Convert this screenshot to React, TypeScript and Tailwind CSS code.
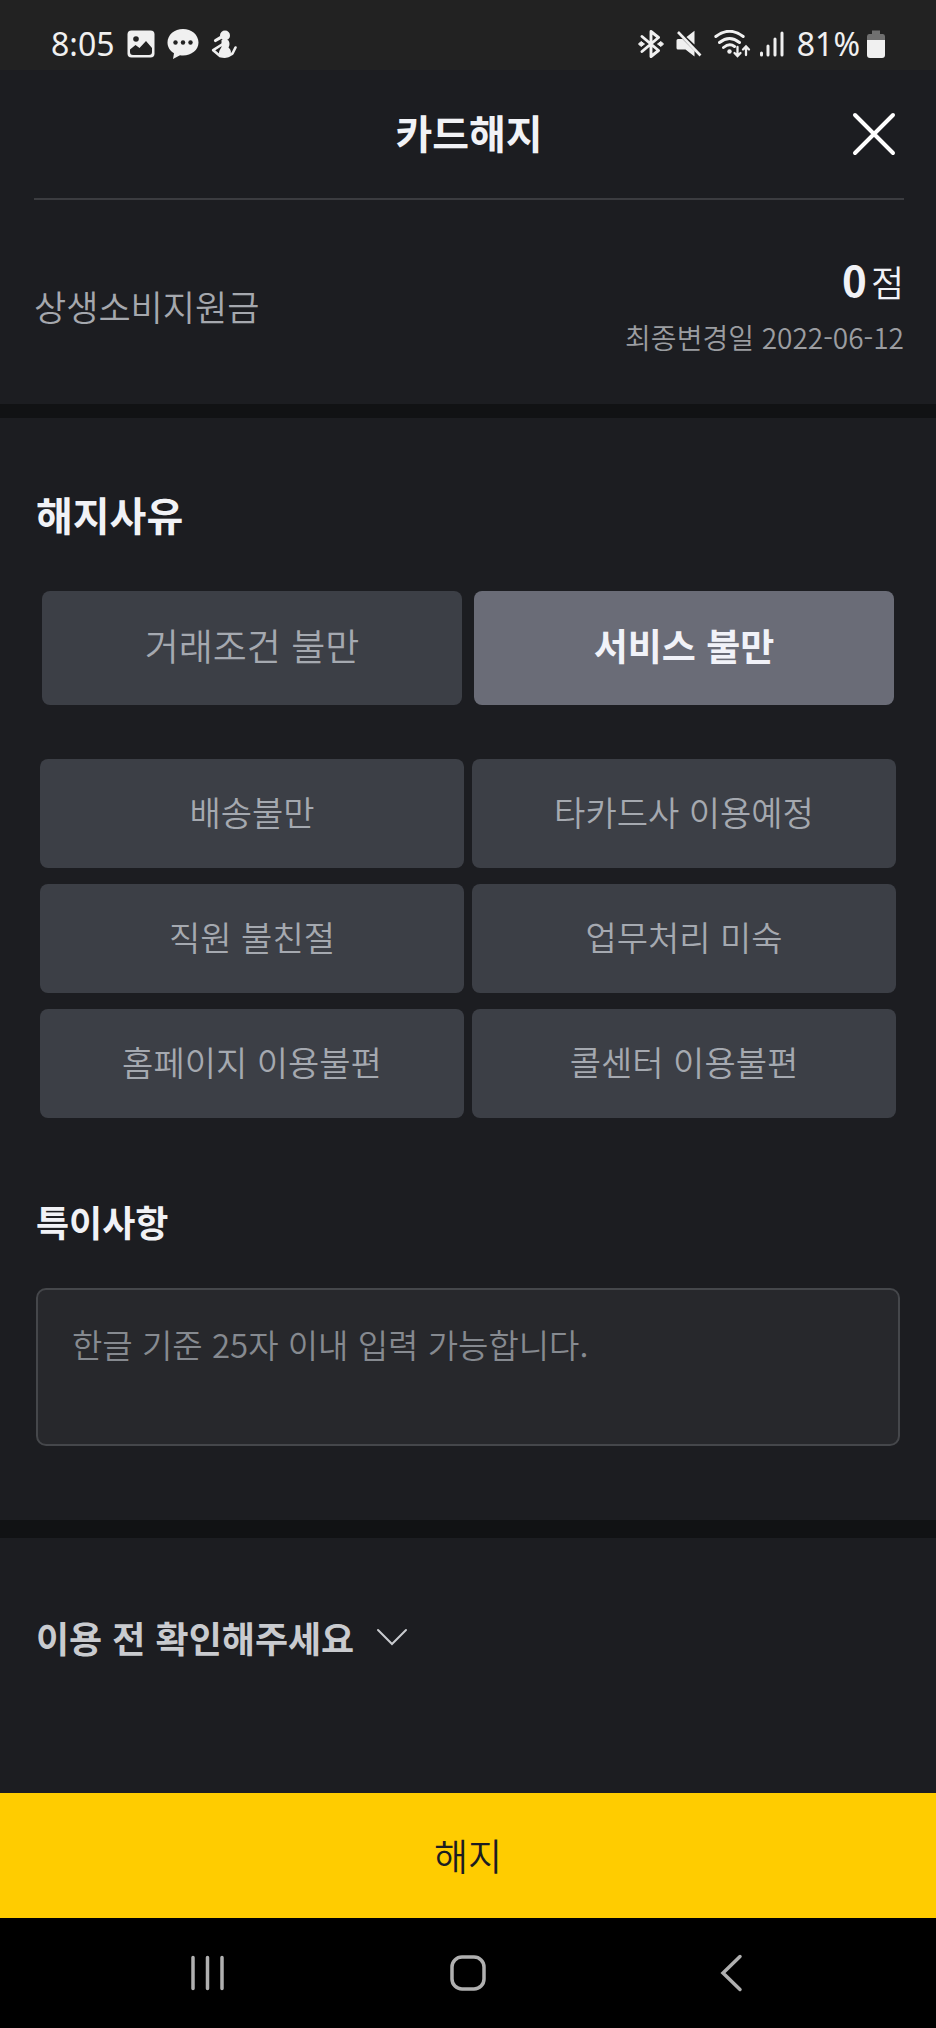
import { useState } from 'react';
import type { ReactNode } from 'react';

const CATEGORIES = ['거래조건 불만', '서비스 불만'];

const REASONS = [
  '배송불만',
  '타카드사 이용예정',
  '직원 불친절',
  '업무처리 미숙',
  '홈페이지 이용불편',
  '콜센터 이용불편',
];

function StatusBar() {
  return (
    <div className="flex h-[70px] items-center justify-between bg-[#222222] pr-[50px] pl-[51px] pt-[18px] text-[#f0f0f0]">
      <div className="flex items-center gap-3">
        <span className="font-['Noto_Sans',sans-serif] text-[32px] leading-10">8:05</span>
        <svg width="28" height="28" viewBox="0 0 28 28" aria-hidden="true">
          <rect x="0.5" y="0.5" width="27" height="27" rx="4" fill="currentColor" />
          <circle cx="9" cy="9" r="2.8" fill="#222222" />
          <path d="M3 19.5 L8.5 15 L12.5 18 L19 11 L25 18 V22 Q25 25 22 25 H6 Q3 25 3 22 Z" fill="#222222" />
        </svg>
        <svg width="32" height="32" viewBox="0 0 32 32" aria-hidden="true">
          <path d="M16 1 C24.500 1 31.500 6.800 31.500 14.500 C31.500 22 24.500 27.500 16 27.500 C15 27.500 14 27.400 13 27.300 L6 31 L7 25.200 C3 22.800 0.500 19 0.500 14.500 C0.500 6.800 7.500 1 16 1 Z" fill="currentColor" />
          <circle cx="8.500" cy="14.500" r="2.200" fill="#222222" />
          <circle cx="16" cy="14.500" r="2.200" fill="#222222" />
          <circle cx="23.500" cy="14.500" r="2.200" fill="#222222" />
        </svg>
        <svg width="26" height="28" viewBox="0 0 26 28" aria-hidden="true">
          <circle cx="14" cy="5.500" r="5" fill="currentColor" />
          <path d="M10.500 10 Q14 8.500 17.500 10.500 Q19.500 14 17.500 17.500 Q21.500 21 19 25 Q17.500 28 13.500 28 Q9 28 7.500 25.500 Q8 20 10.500 17 Z" fill="currentColor" />
          <path d="M4.500 10.500 L9 7.800" stroke="currentColor" strokeWidth="3.200" strokeLinecap="round" />
          <path d="M11 14.500 L2.200 20.200 L9 26 M17 26 L21.500 23.500 L24.500 17.500" fill="none" stroke="currentColor" strokeWidth="2.600" strokeLinecap="round" strokeLinejoin="round" />
        </svg>
      </div>
      <div className="flex items-center gap-3">
        <svg width="26" height="28" viewBox="0 0 26 28" aria-hidden="true">
          <path d="M4 6.500 L20.500 20.500 L13 26.500 V1.500 L20.500 7.500 L4 21.500" fill="none" stroke="currentColor" strokeWidth="2.900" strokeLinejoin="round" strokeLinecap="round" />
          <path d="M0.500 14 L3 11.500 L6.500 14 L3 16.500 Z M19.500 14 L23 11.500 L25.500 14 L23 16.500 Z" fill="currentColor" stroke="currentColor" strokeLinejoin="round" />
        </svg>
        <svg width="26" height="28" viewBox="0 0 26 28" aria-hidden="true">
          <path d="M0.500 10.500 Q0.500 9 2 9 H6.500 L18.500 21 V26.500 L9.500 19.500 H2 Q0.500 19.500 0.500 18 Z M10.500 7 L18.500 0.800 V14.500 Z" fill="currentColor" />
          <path d="M2 2 L24.500 25.500" stroke="currentColor" strokeWidth="2.600" />
        </svg>
        <div className="flex items-center gap-2">
          <svg width="37" height="28" viewBox="0 0 37 28" fill="none" stroke="currentColor" strokeWidth="2.900" strokeLinecap="round" aria-hidden="true">
            <path d="M1.800 6.500 Q15.500 -4 29.200 6.500 M5.500 12.500 Q15.500 4.500 25.500 12.500 M9.500 17.500 Q15.500 12.500 20.500 16.500" />
            <circle cx="15.500" cy="21.500" r="2.200" fill="currentColor" stroke="none" />
            <path d="M23.500 17 V26 M20.500 23 L23.500 26 L26.500 23 M32 25 V16.500 M29 19.500 L32 16.500 L35 19.500" strokeWidth="2.300" />
          </svg>
          <svg width="26" height="28" viewBox="0 0 26 28" stroke="currentColor" strokeWidth="3" strokeLinecap="round" aria-hidden="true">
            <path d="M2.500 23 V25 M9 16 V25 M16 9 V25 M23 3 V25" />
          </svg>
        </div>
        <div className="flex items-center gap-[6px]">
          <span className="font-['Noto_Sans',sans-serif] text-[32px] leading-10">81%</span>
          <svg width="20" height="28" viewBox="0 0 20 28" aria-hidden="true">
            <path d="M6 0.500 H14 V4 H17 Q19 4 19 6.500 V10 H1 V6.500 Q1 4 3 4 H6 Z" fill="#707070" />
            <path d="M1 10 H19 V25 Q19 28 16 28 H4 Q1 28 1 25 Z" fill="currentColor" />
          </svg>
        </div>
      </div>
    </div>
  );
}

function ReasonButton({
  selected,
  onClick,
  className,
  children,
}: {
  selected: boolean;
  onClick: () => void;
  className: string;
  children: ReactNode;
}) {
  return (
    <button
      type="button"
      aria-pressed={selected}
      onClick={onClick}
      className={`rounded-lg pb-1 ${className} ${
        selected ? 'bg-[#6a6c77] font-bold text-[#f1f2f8]' : 'bg-[#3c3f46] font-[350] text-[#a5a9b0]'
      }`}
    >
      {children}
    </button>
  );
}

export default function App() {
  const [category, setCategory] = useState('서비스 불만');
  const [reason, setReason] = useState<string | null>(null);
  const [memo, setMemo] = useState('');
  const [open, setOpen] = useState(false);

  return (
    <div
      lang="ko"
      className="flex min-h-screen flex-col bg-[#1c1d21] font-['Noto_Sans_CJK_KR',sans-serif] text-[#f1f2f6]"
    >
      <StatusBar />

      <header className="mr-8 ml-[34px] grid h-[130px] grid-cols-[1fr_auto_1fr] items-center border-b-2 border-[#3b3c40]">
        <h1 className="col-start-2 pb-1 text-[40px] leading-[60px] font-bold">카드해지</h1>
        <button type="button" aria-label="닫기" className="mr-2 justify-self-end">
          <svg width="44" height="44" viewBox="0 0 44 44" stroke="#ffffff" strokeWidth="4" strokeLinecap="round" aria-hidden="true">
            <path d="M3 3 L41 41 M41 3 L3 41" />
          </svg>
        </button>
      </header>

      <section className="flex h-[204px] items-center justify-between pt-2 pr-8 pl-[34px] font-[350]">
        <h2 className="text-[35px] leading-[52px] text-[#a5a8ae]">상생소비지원금</h2>
        <div className="text-right">
          <p className="flex items-baseline justify-end gap-1 text-[36px] leading-[60px]">
            <strong className="text-[42px] font-bold">0</strong>점
          </p>
          <p className="text-[28px] leading-[52px] text-[#9b9da1]">최종변경일 2022-06-12</p>
        </div>
      </section>

      <div className="h-[14px] bg-[#111214]" />

      <section className="px-9 pt-[66px] pb-[74px]">
        <h2 className="text-[40px] leading-[60px] font-bold">해지사유</h2>
        <div className="mx-[6px] mt-[47px] grid grid-cols-2 gap-3">
          {CATEGORIES.map((c) => (
            <ReasonButton
              key={c}
              selected={category === c}
              onClick={() => setCategory(c)}
              className="h-[114px] text-[37px]"
            >
              {c}
            </ReasonButton>
          ))}
        </div>
        <div className="mx-1 mt-[54px] grid grid-cols-2 gap-x-2 gap-y-4">
          {REASONS.map((r) => (
            <ReasonButton
              key={r}
              selected={reason === r}
              onClick={() => setReason(r)}
              className="h-[109px] text-[34px]"
            >
              {r}
            </ReasonButton>
          ))}
        </div>

        <label htmlFor="memo" className="mt-[76px] block text-[36px] leading-[54px] font-bold">
          특이사항
        </label>
        <textarea
          id="memo"
          rows={2}
          maxLength={25}
          value={memo}
          onChange={(e) => setMemo(e.target.value)}
          placeholder="한글 기준 25자 이내 입력 가능합니다."
          className="mt-10 block h-[158px] w-full resize-none rounded-[10px] border-2 border-[#45474b] bg-[#27282c] px-[34px] py-[30px] text-[33px] leading-[48px] font-[350] placeholder:text-[#868a90]"
        />
      </section>

      <div className="h-[18px] bg-[#111214]" />

      <section className="px-9 pt-[72px] pb-16">
        <button
          type="button"
          aria-expanded={open}
          onClick={() => setOpen(!open)}
          className="flex items-center gap-[22px] text-[36px] leading-[54px] font-bold text-[#c9cbcf]"
        >
          이용 전 확인해주세요
          <svg width="32" height="18" viewBox="0 0 32 18" fill="none" stroke="currentColor" strokeWidth="2" strokeLinecap="round" aria-hidden="true">
            <path d="M2 2 L16 16 L30 2" />
          </svg>
        </button>
      </section>

      <button
        type="button"
        className="mt-auto h-[125px] w-full shrink-0 bg-[#ffcc00] text-[37px] font-[350] text-[#1c1d21]"
      >
        해지
      </button>

      <nav className="flex h-[110px] shrink-0 items-center justify-between bg-black px-[188px] text-[#b0b0b0]">
        <button type="button" aria-label="최근 앱">
          <svg width="40" height="40" viewBox="0 0 40 40" stroke="currentColor" strokeWidth="3.500" strokeLinecap="round" aria-hidden="true">
            <path d="M5 4.500 V35.500 M19.500 4.500 V35.500 M34 4.500 V35.500" />
          </svg>
        </button>
        <button type="button" aria-label="홈">
          <svg width="40" height="40" viewBox="0 0 40 40" fill="none" stroke="currentColor" strokeWidth="3.500" aria-hidden="true">
            <rect x="4" y="4" width="32" height="32" rx="10" />
          </svg>
        </button>
        <button type="button" aria-label="뒤로">
          <svg width="40" height="40" viewBox="0 0 40 40" fill="none" stroke="currentColor" strokeWidth="3.500" strokeLinecap="round" aria-hidden="true">
            <path d="M32 3.500 L15 20 L32 36.500" />
          </svg>
        </button>
      </nav>
    </div>
  );
}
